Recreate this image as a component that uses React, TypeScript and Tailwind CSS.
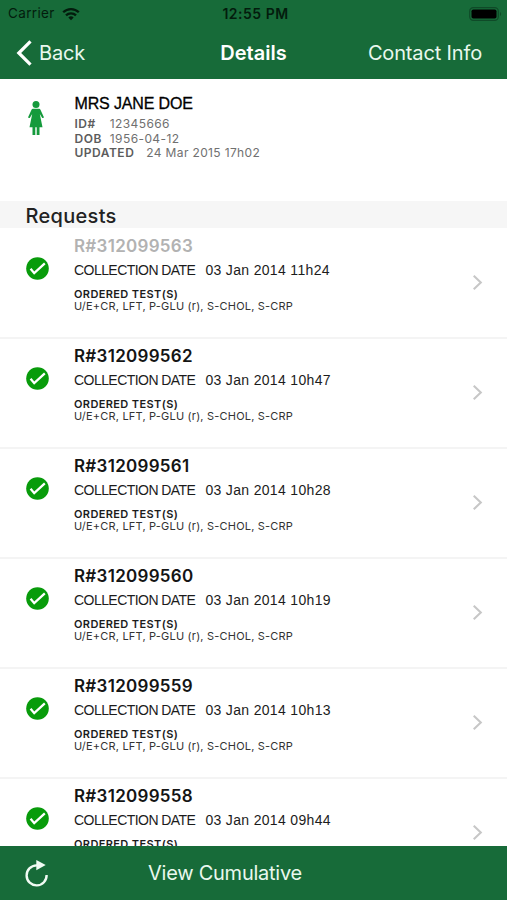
import React from 'react';

interface LabRequest {
    id: string;
    collected: string;
    viewed?: boolean;
}

const TESTS = 'U/E+CR, LFT, P-GLU (r), S-CHOL, S-CRP';

const requests: LabRequest[] = [
    { id: 'R#312099563', collected: '03 Jan 2014 11h24', viewed: true },
    { id: 'R#312099562', collected: '03 Jan 2014 10h47' },
    { id: 'R#312099561', collected: '03 Jan 2014 10h28' },
    { id: 'R#312099560', collected: '03 Jan 2014 10h19' },
    { id: 'R#312099559', collected: '03 Jan 2014 10h13' },
    { id: 'R#312099558', collected: '03 Jan 2014 09h44' },
];

const WifiIcon = () => (
    <svg className="ml-[7px] h-[14px] w-[18px]" viewBox="0 0 18 14" fill="none" stroke="#031c0d" strokeWidth="2.3">
        <path d="M1.2 5.3a11 11 0 0 1 15.6 0" />
        <path d="M4 8.4a7.1 7.1 0 0 1 10 0" />
        <path d="M9 13.2 6.3 10.5a3.9 3.9 0 0 1 5.4 0z" fill="#031c0d" stroke="none" />
    </svg>
);

const BatteryIcon = () => (
    <svg className="h-[14px] w-[33px]" viewBox="0 0 33 14">
        <rect x="0.7" y="0.7" width="28.6" height="12.6" rx="3.6" fill="none" stroke="#0f4a28" strokeWidth="1.2" />
        <rect x="2.5" y="2.5" width="25" height="9" rx="1.8" fill="#000" />
        <path d="M31 5v4c1.4-.5 1.4-3.5 0-4z" fill="#0f4a28" />
    </svg>
);

const PatientIcon = () => (
    <svg className="h-[34px] w-[16px]" viewBox="0 0 16 34" fill="#159a3c">
        <circle cx="8" cy="3.6" r="3.5" />
        <path d="M5.4 7.8h5.2c1 0 1.7.5 2.1 1.4l3.1 6.8c.4.9-1.2 1.5-1.7.7l-2.3-3.8 2.7 13.4h-3V34H8.7v-7.7H7.3V34H4.5v-7.7h-3l2.7-13.4-2.3 3.8c-.5.8-2.1.2-1.7-.7l3.1-6.8c.4-.9 1.1-1.4 2.1-1.4z" />
    </svg>
);

const CheckIcon = () => (
    <svg className="h-[23px] w-[23px]" viewBox="0 0 23 23">
        <circle cx="11.5" cy="11.5" r="11.3" fill="#089b0b" />
        <path d="m4.6 11.8 3.6 4.4L18.8 6.4" fill="none" stroke="#fff" strokeWidth="2.3" />
    </svg>
);

const RefreshIcon = () => (
    <svg className="h-[27px] w-[24px]" viewBox="0 0 24 27">
        <path d="M13 5.4h-1.5A10 10 0 1 0 21.6 15" fill="none" stroke="#f1fbf4" strokeWidth="2.4" />
        <path d="M11.3 0v10.2l9.4-5.1z" fill="#f1fbf4" />
    </svg>
);

const StatusBar = () => (
    <div className="grid h-[27px] grid-cols-3 items-center pl-[8px] pr-[5px] text-[13.5px] text-[#031c0d]">
        <div className="flex items-center">
            <span className="tracking-[0.35px]">Carrier</span>
            <WifiIcon />
        </div>
        <span className="pl-[1px] text-center text-[14px] font-semibold tracking-[0.5px]">12:55 PM</span>
        <div className="flex justify-end">
            <BatteryIcon />
        </div>
    </div>
);

const NavBar = () => (
    <div className="grid h-[52px] grid-cols-3 items-center pl-[16px] pr-[25px] text-[20px] text-[#e9f8ee]">
        <button type="button" className="flex items-center whitespace-nowrap tracking-[-0.2px]">
            <svg className="mr-[7px] h-[26px] w-[16px]" viewBox="0 0 16 26" fill="none" stroke="#fff" strokeWidth="3.2">
                <path d="M14.5 1.3 2.8 13l11.7 11.7" />
            </svg>
            Back
        </button>
        <h1 className="pl-[9px] text-center font-semibold text-white">Details</h1>
        <button type="button" className="justify-self-end whitespace-nowrap tracking-[-0.15px]">Contact Info</button>
    </div>
);

const PatientSummary = () => (
    <section className="flex h-[122px] shrink-0 pl-[28px] pt-[15px]">
        <div className="w-[46.5px] pt-[7px]">
            <PatientIcon />
        </div>
        <div className="text-[12px] leading-[14.7px] text-[#707070]">
            <h2 className="mb-[4px] font-['Liberation_Sans',sans-serif] text-[16px] leading-[19px] tracking-[-0.15px] text-black [-webkit-text-stroke:0.3px_#000]">
                MRS JANE DOE
            </h2>
            <div className="flex gap-[14px]">
                <span className="font-semibold tracking-[0.5px] text-[#5c5c5c]">ID#</span>
                <span className="tracking-[0.4px]">12345666</span>
            </div>
            <div className="flex gap-[8px]">
                <span className="font-semibold tracking-[0.5px] text-[#5c5c5c]">DOB</span>
                <span className="tracking-[0.4px]">1956-04-12</span>
            </div>
            <div className="flex gap-[12px]">
                <span className="font-semibold tracking-[0.5px] text-[#5c5c5c]">UPDATED</span>
                <span className="tracking-[0.35px]">24 Mar 2015 17h02</span>
            </div>
        </div>
    </section>
);

const RequestRow: React.FC<{ request: LabRequest }> = ({ request }) => (
    <li className="flex h-[110px] shrink-0 border-b-2 border-[#f4f4f4] pl-[26px] pr-[24px]">
        <div className="w-[48px] pt-[28px]">
            <CheckIcon />
        </div>
        <div className="flex-1 pt-[6px] text-[#1c1c1c]">
            <h3 className={`text-[17px] font-semibold leading-[22px] tracking-[0.28px] ${request.viewed ? 'text-[#b2b2b2]' : 'text-[#141414]'}`}>
                {request.id}
            </h3>
            <div className="mt-[4px] flex gap-[10px] font-['Liberation_Sans',sans-serif] text-[14px] leading-[18px]">
                <span className="tracking-[-0.55px]">COLLECTION DATE</span>
                <span className="tracking-[0.33px]">{request.collected}</span>
            </div>
            <div className="mt-[9px] text-[11px] font-semibold leading-[12px] tracking-[0.38px]">ORDERED TEST(S)</div>
            <div className="text-[11px] leading-[13px] tracking-[0.2px] text-[#333]">{TESTS}</div>
        </div>
        <svg className="mt-[45px] h-[17px] w-[11px]" viewBox="0 0 11 18" fill="none" stroke="#c7c7c7" strokeWidth="2.2">
            <path d="m1.5 1.8 7.5 7.2-7.5 7.2" />
        </svg>
    </li>
);

const App: React.FC = () => {
    return (
        <div className="flex h-[900px] w-[507px] flex-col overflow-hidden bg-white font-['Inter',sans-serif]">
            <header className="h-[79px] shrink-0 bg-[#176b39]">
                <StatusBar />
                <NavBar />
            </header>
            <main className="flex min-h-0 flex-1 flex-col overflow-hidden">
                <PatientSummary />
                <h2 className="h-[27px] shrink-0 bg-[#f6f6f6] pl-[25.5px] text-[20px] font-medium leading-[30px] tracking-[0.3px] text-[#222]">
                    Requests
                </h2>
                <ul className="pt-px">
                    {requests.map((request) => (
                        <RequestRow key={request.id} request={request} />
                    ))}
                </ul>
            </main>
            <footer className="flex h-[54px] shrink-0 items-center bg-[#176b39] pl-[25px] text-[20px] text-[#e9f8ee]">
                <button type="button" aria-label="Refresh">
                    <RefreshIcon />
                </button>
                <button type="button" className="ml-[99px] tracking-[-0.25px]">View Cumulative</button>
            </footer>
        </div>
    );
};

export default App;
